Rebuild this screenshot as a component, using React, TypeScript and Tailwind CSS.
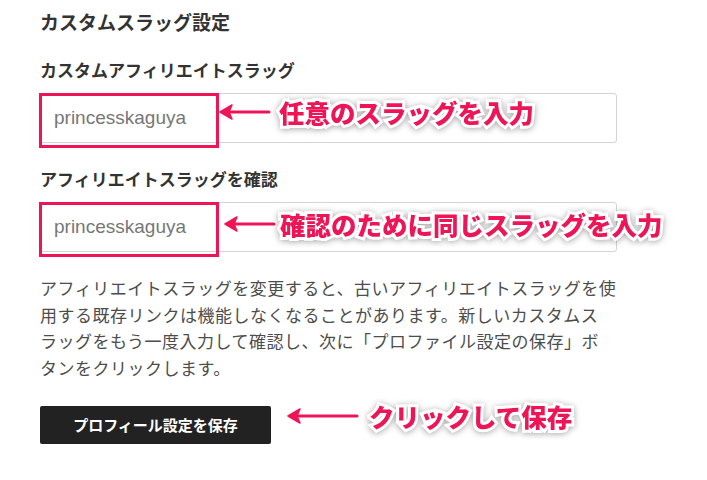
import React from "react";

const jp = { fontFamily: '"Noto Sans CJK JP", "Noto Sans", sans-serif' };

const LeftArrow = ({ w }: { w: number }) => (
  <svg width={w + 4} height="18" viewBox={`0 0 ${w + 4} 18`} className="block shrink-0">
    <line x1="6" y1="9" x2={w + 2} y2="9" stroke="#ee1556" strokeWidth="3" strokeLinecap="round" />
    <path d="M1 9 L13 2 L10 9 L13 16 Z" fill="#ee1556" stroke="#ee1556" strokeWidth="1.5" strokeLinejoin="round" />
  </svg>
);

const Note = ({ children }: { children: React.ReactNode }) => (
  <span
    className="whitespace-nowrap text-[25.5px] font-black leading-none text-[#ee1556] [paint-order:stroke_fill] [-webkit-text-stroke:6px_white] drop-shadow-[0_1px_3px_rgba(0,0,0,0.35)]"
    style={jp}
  >
    {children}
  </span>
);

// callout: arrow + pink caption, laid over the page
const Callout = ({ w, gap, text, className }: { w: number; gap: string; text: string; className: string }) => (
  <div className={`absolute flex items-center ${gap} ${className}`}>
    <LeftArrow w={w} />
    <Note>{text}</Note>
  </div>
);

const SlugField = ({ label }: { label: string }) => (
  <div className="flex flex-col gap-[11px]">
    <h3 className="text-[17px] font-bold leading-[24px] text-[#333]">{label}</h3>
    <div className="relative flex h-[50px] w-[577px] items-center rounded-[3px] border border-[#d4d4d4] bg-white px-[13px]">
      <span
        className="text-[19px] text-[#777]"
        style={{ fontFamily: '"Liberation Sans", Arial, sans-serif' }}
      >
        princesskaguya
      </span>
      {/* highlight box */}
      <div className="absolute -left-[2px] -top-[1px] h-[55px] w-[180px] border-[3px] border-[#ee1556]" />
    </div>
  </div>
);

export default function App() {
  return (
    <div className="relative h-[480px] w-[707px] overflow-hidden bg-white" style={jp}>
      <div className="flex flex-col gap-[24px] px-[40px] pt-[10px]">
        <h2 className="text-[19px] font-bold leading-[24px] text-[#333]">カスタムスラッグ設定</h2>

        <SlugField label="カスタムアフィリエイトスラッグ" />
        <SlugField label="アフィリエイトスラッグを確認" />

        <div className="flex flex-col items-start gap-[25px]">
          <p className="-mt-[1px] text-[17px] leading-[26.5px] tracking-[0.5px] text-[#4d4d4d]">
            アフィリエイトスラッグを変更すると、古いアフィリエイトスラッグを使
            <br />
            用する既存リンクは機能しなくなることがあります。新しいカスタムス
            <br />
            ラッグをもう一度入力して確認し、次に「プロファイル設定の保存」ボ
            <br />
            タンをクリックします。
          </p>

          <button className="flex h-[38px] w-[231px] items-center justify-center rounded-[2px] bg-[#222] text-[15px] font-bold text-white">
            プロフィール設定を保存
          </button>
        </div>
      </div>

      {/* annotations */}
      <Callout w={48} gap="gap-[8px]" text="任意のスラッグを入力" className="left-[219px] top-[99px]" />
      <Callout w={48} gap="gap-[4px]" text="確認のために同じスラッグを入力" className="left-[224px] top-[211px]" />
      <Callout w={68} gap="gap-[10px]" text="クリックして保存" className="left-[287px] top-[403px]" />
    </div>
  );
}
